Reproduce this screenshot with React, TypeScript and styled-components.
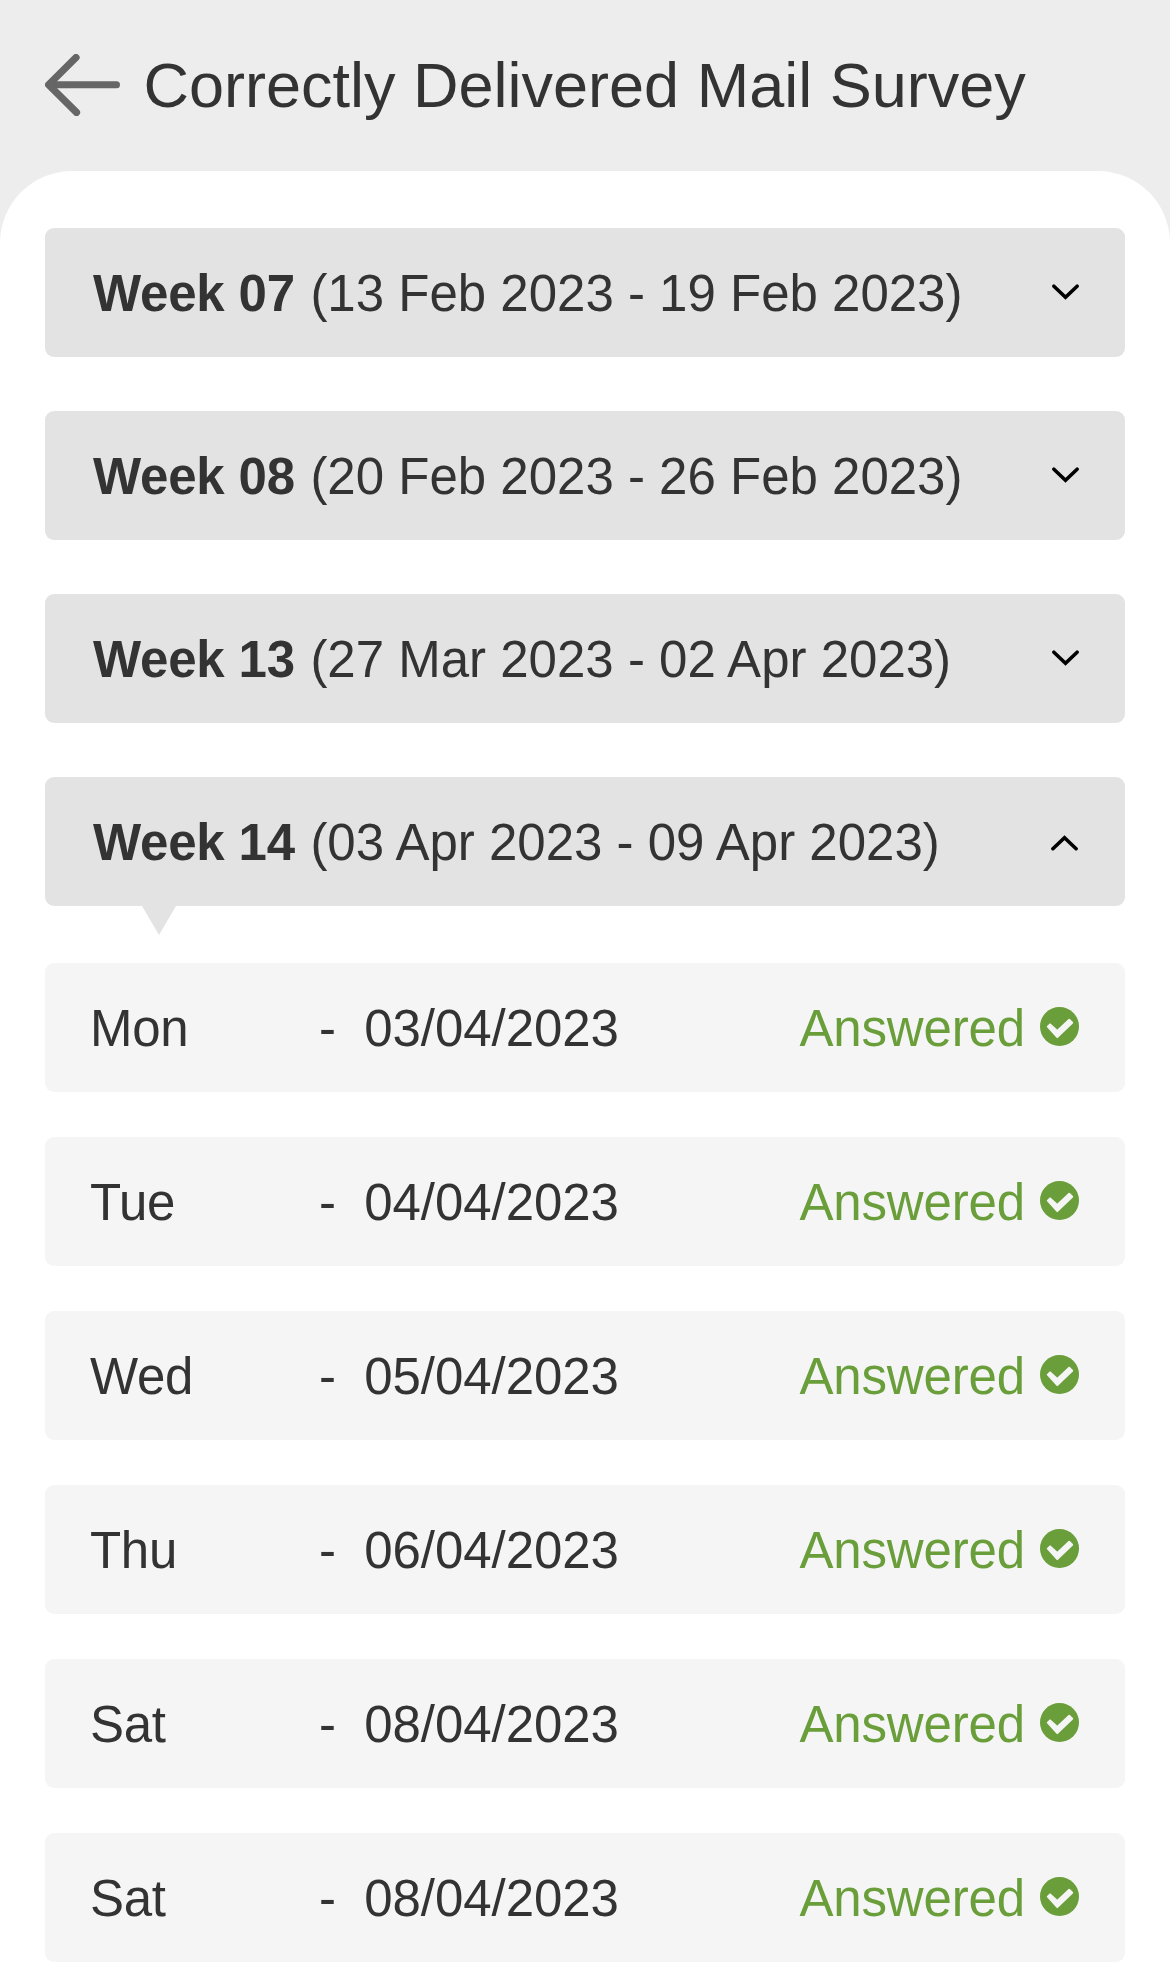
import React, { useState } from "react";
import styled, { createGlobalStyle } from "styled-components";

const GlobalStyle = createGlobalStyle`
  * { box-sizing: border-box; }
  html, body { margin: 0; padding: 0; background: #ededed; }
  body {
    height: 1970px;
    overflow: hidden;
    font-family: "Liberation Sans", Arial, Helvetica, sans-serif;
    font-size: 51px;
    color: #333;
  }
`;

const Page = styled.div`
  width: 1170px;
  height: 1970px;
  display: flex;
  flex-direction: column;
  overflow: hidden;
  background: #ededed;
`;

const Header = styled.header`
  flex: none;
  height: 171px;
  padding: 0 45px;
  display: flex;
  align-items: flex-start;
`;

const BackButton = styled.button`
  flex: none;
  width: 98.5px;
  margin-top: 54px;
  padding: 0;
  border: 0;
  background: none;
  display: flex;
`;

const Title = styled.h1`
  margin: 49px 0 0;
  font-size: 63px;
  line-height: 72px;
  font-weight: 400;
  white-space: nowrap;
`;

const Panel = styled.main`
  flex: 1;
  padding: 57px 45px 0;
  border-radius: 72px 72px 0 0;
  background: #fff;
  display: flex;
  flex-direction: column;
  gap: 54px;
`;

const Week = styled.section`
  display: flex;
  flex-direction: column;
  flex: none;
`;

const WeekBar = styled.button`
  position: relative;
  height: 129px;
  padding: 3px 45px 0 48px;
  border: 0;
  border-radius: 9px;
  background: #e3e3e3;
  color: inherit;
  font: inherit;
  line-height: 58px;
  text-align: left;
  white-space: pre;
  display: flex;
  align-items: center;
  justify-content: space-between;
`;

const WeekName = styled.b`
  letter-spacing: -0.2px;
  margin-right: 1.4px;
`;

const Pointer = styled.span`
  position: absolute;
  top: 100%;
  left: 97px;
  width: 34px;
  height: 29px;
  background: #e3e3e3;
  clip-path: polygon(0 0, 100% 0, 50% 100%);
`;

const ChevronIcon = styled.svg<{ $open: boolean }>`
  flex: none;
  margin-top: ${(p) => (p.$open ? -1 : -4)}px;
  margin-right: ${(p) => (p.$open ? 2 : 1)}px;
`;

const Days = styled.ul`
  list-style: none;
  margin: 57px 0 0;
  padding: 0;
  display: flex;
  flex-direction: column;
  gap: 45px;
`;

const Day = styled.li`
  height: 129px;
  padding: 3px 46px 0 45px;
  border-radius: 9px;
  background: #f5f5f5;
  line-height: 58px;
  display: flex;
  align-items: center;
`;

const DayName = styled.span`
  width: 229px;
  letter-spacing: -0.3px;
`;

const DayDate = styled.span`
  flex: 1;
  white-space: pre;
  letter-spacing: -0.05px;
`;

const Status = styled.span`
  display: flex;
  align-items: center;
  gap: 15px;
  letter-spacing: -0.15px;
  color: #699e3a;
`;

const CheckIcon = styled.svg`
  flex: none;
  margin-top: -6px;
`;

function Chevron({ open }: { open: boolean }) {
  return (
    <ChevronIcon $open={open} width="27" height="16" viewBox="0 0 27 16" fill="none" stroke="#000" strokeWidth="3.6" strokeLinecap="round">
      <path d={open ? "M1.9 13.7 13.5 2.7 25.1 13.7" : "M1.9 2.2 13.5 13.2 25.1 2.2"} />
    </ChevronIcon>
  );
}

function Check() {
  return (
    <CheckIcon width="39" height="39" viewBox="0 0 39 39">
      <circle cx="19.5" cy="19.5" r="19.5" fill="#699e3a" />
      <path
        d="M7.8 19.6 10.1 17.4 17.3 24 29.2 12.8 32.2 15.8 17.3 30.1Z"
        fill="#f5f5f5"
        stroke="#f5f5f5"
        strokeWidth="2"
        strokeLinejoin="round"
      />
    </CheckIcon>
  );
}

const weeks = [
  { name: "Week 07", range: "(13 Feb 2023 - 19 Feb 2023)" },
  { name: "Week 08", range: "(20 Feb 2023 - 26 Feb 2023)" },
  { name: "Week 13", range: "(27 Mar 2023 - 02 Apr 2023)" },
  { name: "Week 14", range: "(03 Apr 2023 - 09 Apr 2023)" },
];

const days = [
  ["Mon", "03/04/2023"],
  ["Tue", "04/04/2023"],
  ["Wed", "05/04/2023"],
  ["Thu", "06/04/2023"],
  ["Sat", "08/04/2023"],
  ["Sat", "08/04/2023"],
];

export default function App() {
  const [openWeek, setOpenWeek] = useState("Week 14");
  return (
    <>
      <GlobalStyle />
      <Page>
        <Header>
          <BackButton aria-label="Back">
            <svg width="75" height="62" viewBox="0 0 75 62" fill="none" stroke="#666" strokeLinecap="round" strokeLinejoin="round">
              <path d="M5 30.8H71.5" strokeWidth="7" />
              <path d="M31 3.5 3.6 30.8 31.5 58.4" strokeWidth="7.2" />
            </svg>
          </BackButton>
          <Title>Correctly Delivered Mail Survey</Title>
        </Header>
        <Panel>
          {weeks.map((w) => {
            const open = w.name === openWeek;
            return (
              <Week key={w.name}>
                <WeekBar aria-expanded={open} onClick={() => setOpenWeek(open ? "" : w.name)}>
                  <span>
                    <WeekName>{w.name}</WeekName> {w.range}
                  </span>
                  <Chevron open={open} />
                  {open && <Pointer />}
                </WeekBar>
                {open && (
                  <Days>
                    {days.map(([name, date], i) => (
                      <Day key={i}>
                        <DayName>{name}</DayName>
                        <DayDate>{"-  " + date}</DayDate>
                        <Status>
                          Answered
                          <Check />
                        </Status>
                      </Day>
                    ))}
                  </Days>
                )}
              </Week>
            );
          })}
        </Panel>
      </Page>
    </>
  );
}
